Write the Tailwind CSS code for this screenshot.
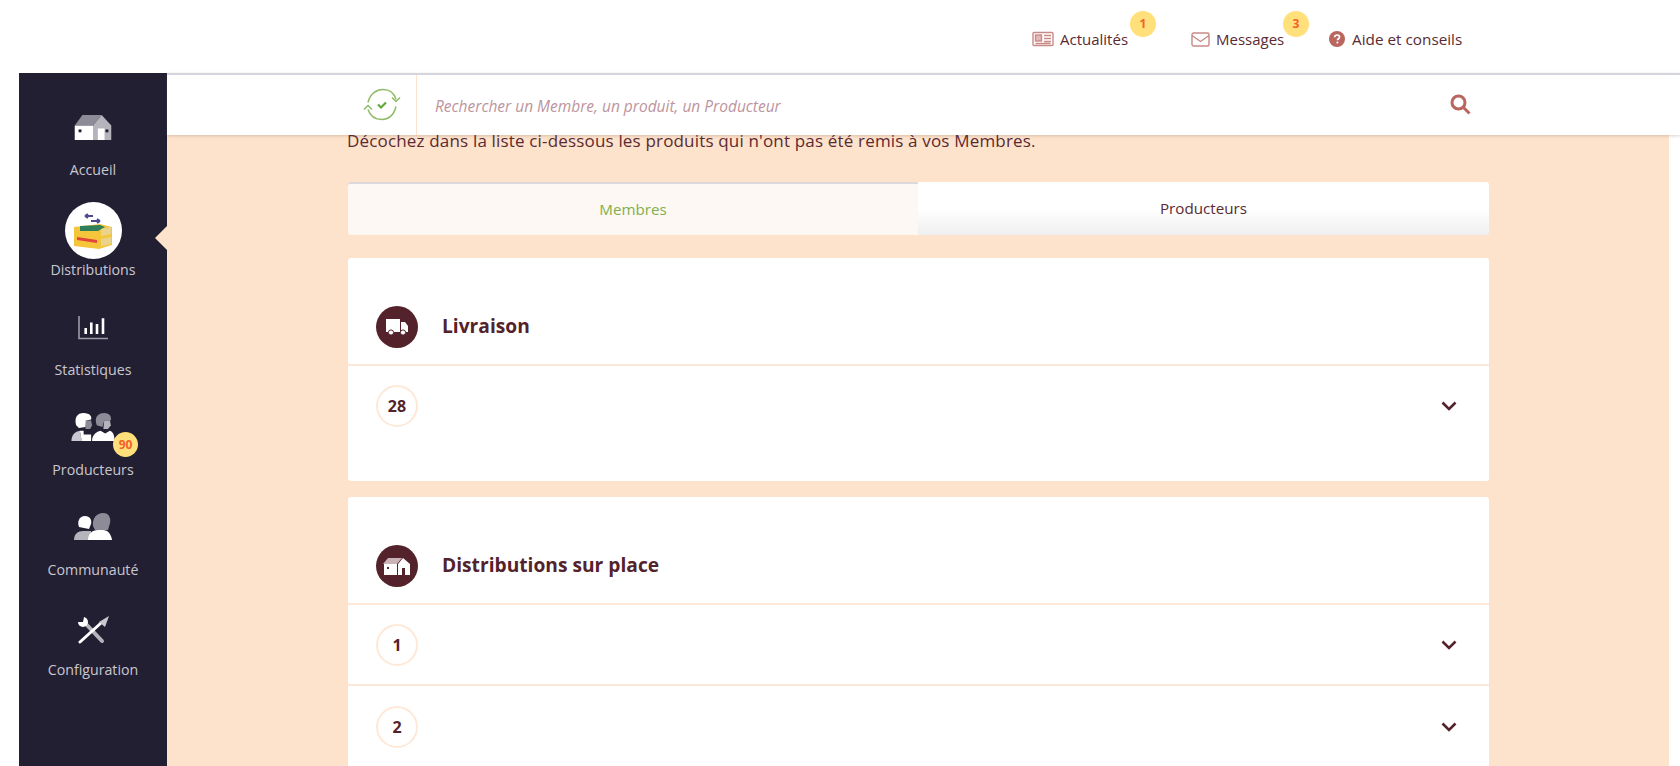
<!DOCTYPE html>
<html lang="fr">
<head>
    <meta charset="UTF-8">
    <title>Distributions</title>
    <script src="https://cdn.jsdelivr.net/npm/@tailwindcss/browser@4"></script>
</head>
<body class="bg-white h-[766px] overflow-hidden font-['Open_Sans',sans-serif] text-[#5a2a33]">
    <!-- top links -->
    <header class="h-[73px] relative text-[15px] leading-[20px]">
        <a class="flex items-center absolute left-[1032px] top-[29px]">
            <svg class="w-[22px] h-[16px] mr-[6px]" viewBox="0 0 22 16" fill="none" stroke="#c98a86" stroke-width="1.4"><rect x="1" y="1.5" width="20" height="13" rx="1"/><rect x="3.5" y="4" width="6" height="6" fill="#e3b9b5"/><path d="M12 4.5h7M12 7.5h7M12 10.5h7M3.5 12.5h15"/></svg>
            <span>Actualités</span>
        </a>
        <span class="absolute left-[1130px] top-[11px] w-[26px] h-[26px] rounded-full bg-[#ffe07a] text-[#f5612c] text-[12px] font-bold flex items-center justify-center">1</span>
        <a class="flex items-center absolute left-[1191px] top-[29px]">
            <svg class="w-[19px] h-[15px] mr-[6px]" viewBox="0 0 19 15" fill="none" stroke="#c98a86" stroke-width="1.4"><rect x="1" y="1" width="17" height="13" rx="1.5"/><path d="M1 3.5l8.5 6 8.5-6"/></svg>
            <span>Messages</span>
        </a>
        <span class="absolute left-[1283px] top-[11px] w-[26px] h-[26px] rounded-full bg-[#ffe07a] text-[#f5612c] text-[12px] font-bold flex items-center justify-center">3</span>
        <a class="flex items-center absolute left-[1329px] top-[29px] text-[15.3px]">
            <svg class="w-[16px] h-[16px] mr-[7px]" viewBox="0 0 16 16"><circle cx="8" cy="8" r="8" fill="#b9665f"/><path d="M5.6 6.2c0-1.4 1.1-2.2 2.5-2.2s2.4.8 2.4 2c0 1.7-2 1.7-2 3.2" fill="none" stroke="#fff" stroke-width="1.7"/><rect x="7.5" y="10.6" width="1.8" height="1.8" fill="#fff"/></svg>
            <span>Aide et conseils</span>
        </a>
    </header>

    <div class="ml-[19px] flex h-[693px]">
        <!-- sidebar -->
        <nav class="w-[148px] bg-[#231f33] text-[#c9c7cf] text-[14.2px] flex flex-col shrink-0 relative">
            <a class="h-[107px] shrink-0 flex flex-col items-center">
                <svg class="mt-[42px] w-[38px] h-[25px] shrink-0" viewBox="0 0 38 26"><path d="M0 11 8 0h20l-9 11z" fill="#8d8b97"/><path d="M0 11h19v15H0z" fill="#fff"/><path d="M19 11 28 0l10 11v15H19z" fill="#b5b3bb"/><rect x="4" y="15" width="3" height="3" fill="#231f33"/><rect x="24" y="14" width="7" height="12" fill="#fff"/><rect x="32" y="15" width="3" height="3" fill="#231f33"/></svg>
                <span class="mt-[20px] leading-[20px]">Accueil</span>
            </a>
            <a class="h-[100px] shrink-0 flex flex-col items-center">
                <span class="mt-[22px] w-[57px] h-[57px] shrink-0 rounded-full bg-white flex items-center justify-center">
                    <svg class="w-[38px] h-[36px]" viewBox="0 0 38 36"><path d="M11 3h8M11 3l3-2M11 3l3 2M17 8h9M26 8l-3-2M26 8l-3 2" fill="none" stroke="#4d4a8f" stroke-width="2"/><path d="M0 14l26-3 12 3v18l-13 4-25-3z" fill="#f5c63c"/><path d="M6 13l20-1 5 2-7 4-18 0z" fill="#2f7f5b"/><path d="M3 24l20 3v3l-20-3z" fill="#e2453c"/><path d="M27 16l10-2v7l-10 2zM27 26l10-2v7l-10 2z" fill="#ead48c"/></svg>
                </span>
                <span class="mt-[1px] leading-[20px]">Distributions</span>
            </a>
            <a class="h-[100px] shrink-0 flex flex-col items-center">
                <svg class="mt-[36px] w-[30px] h-[24px] shrink-0" viewBox="0 0 30 24" fill="none"><path d="M1 0v22.5h29" stroke="#9d9ba6" stroke-width="1.6"/><path d="M7.7 12v6M13.3 6.5V18M19 8v10M25 2.3V18" stroke="#fff" stroke-width="2.6"/></svg>
                <span class="mt-[20px] leading-[20px]">Statistiques</span>
            </a>
            <a class="h-[100px] shrink-0 flex flex-col items-center relative">
                <svg class="mt-[32px] w-[44px] h-[30px] shrink-0" viewBox="0 0 46 32"><path d="M5 14C3 6 6 1 13 1c7 0 9 4 8 7l-5 1-1 7-7 1z" fill="#fff"/><path d="M15 9h6l1 5-2 4h-5z" fill="#8d8b97"/><path d="M0 31c0-7 4-10 9-11l2 11z" fill="#c9c7cf"/><path d="M9 20h4v4h8v7H11z" fill="#fff"/><path d="M27 14c-3-8 1-13 8-13 6 0 8 4 7 8h-7l-2 7z" fill="#8d8b97"/><path d="M35 9h6l1 5-3 4h-5z" fill="#b5b3bb"/><path d="M22 31c0-7 5-10 9-11l5 3 5-3c3 1 5 4 5 11z" fill="#fff"/></svg>
                <span class="mt-[18px] leading-[20px]">Producteurs</span>
                <span class="absolute left-[94px] top-[52px] w-[25px] h-[25px] rounded-full bg-[#ffe07a] text-[#f5612c] text-[12px] font-bold flex items-center justify-center">90</span>
            </a>
            <a class="h-[100px] shrink-0 flex flex-col items-center">
                <svg class="mt-[33px] w-[38px] h-[28px] shrink-0" viewBox="0 0 38 28"><path d="M5 14c-2-5 0-11 6-11 5 0 7 4 6 8l-2 5z" fill="#fff"/><path d="M0 27c0-6 4-9 9-9h8v9z" fill="#b5b3bb"/><path d="M19 13c-1-8 4-13 10-13s8 5 7 10l-2 7H21z" fill="#8d8b97"/><path d="M14 27c0-6 4-10 10-10h5c5 0 8 4 9 10z" fill="#fff"/></svg>
                <span class="mt-[19px] leading-[20px]">Communauté</span>
            </a>
            <a class="h-[100px] shrink-0 flex flex-col items-center">
                <svg class="mt-[36px] w-[32px] h-[28px] shrink-0" viewBox="0 0 32 28" fill="none"><path d="M8 7l17 18" stroke="#b5b3bb" stroke-width="4" stroke-linecap="round"/><circle cx="6" cy="6" r="5" fill="#fff"/><path d="M0 0l7 1-1 5-6 0z" fill="#231f33"/><path d="M3 26 24 7" stroke="#fff" stroke-width="3" stroke-linecap="round"/><path d="M22 6l10-6-4 11z" fill="#c9c7cf"/></svg>
                <span class="mt-[16px] leading-[20px]">Configuration</span>
            </a>
            <span class="absolute left-[136px] top-[153px] w-0 h-0 border-y-[12px] border-y-transparent border-r-[12px] border-r-[#fee3cc]"></span>
        </nav>

        <main class="flex-1 min-w-0 flex flex-col">
            <!-- search bar -->
            <div class="h-[62px] bg-white border-t-2 border-[#d5d5e0] shadow-[0_1px_3px_rgba(120,80,60,0.25)] relative z-10 flex items-center shrink-0">
                <div class="w-[250px] h-full border-r border-[#fee3cc] flex items-center justify-end pr-[14px] shrink-0">
                    <svg class="w-[40px] h-[35px] -mt-[2px]" viewBox="0 0 40 34" fill="none" stroke="#8fbb68" stroke-width="1.5"><path d="M6 15C8 6 15 2 21 2c6 0 11 3 13 10"/><path d="M34 19c-2 9-8 13-14 13-7 0-12-4-14-10"/><path d="M30 10l4 4 4-4M2 22l4-4 4 4"/><path d="M16 17l3 3 5-5" stroke="#5fa83e" stroke-width="2.2"/></svg>
                </div>
                <span class="ml-[18px] mt-[4px] italic text-[15.5px] text-[#bd949d]">Rechercher un Membre, un produit, un Producteur</span>
                <svg class="absolute left-[1283px] top-[19px] w-[21px] h-[21px]" viewBox="0 0 21 21" fill="none" stroke="#b9665f" stroke-width="3"><circle cx="8.5" cy="8.5" r="6.5"/><path d="M13.5 13.5l6 6"/></svg>
            </div>

            <div class="bg-[#fee3cc] flex-1 mr-[11px] pl-[181px] pr-[180px] -mt-[5px] overflow-hidden">
                <p class="text-[17px] tracking-[0.17px] leading-[22px] -ml-[1px] text-[#5a2a33]">Décochez dans la liste ci-dessous les produits qui n'ont pas été remis à vos Membres.</p>

                <!-- tabs -->
                <div class="mt-[30px] h-[53px] flex text-[15.2px]">
                    <div class="w-[570px] rounded-l-[3px] bg-[#fdf8f4] border-t-2 border-[#dcd8dc] text-[#7fb04f] flex items-center justify-center">Membres</div>
                    <div class="flex-1 rounded-r-[3px] bg-gradient-to-b from-white from-50% to-[#efefef] flex items-center justify-center">Producteurs</div>
                </div>

                <!-- livraison -->
                <section class="mt-[23px] bg-white rounded-[3px] h-[223px]">
                    <div class="h-[108px] pt-[48px] pl-[28px] flex items-start border-b-2 border-[#fee9d8]">
                        <span class="w-[42px] h-[42px] rounded-full bg-[#54222b] flex items-center justify-center">
                            <svg class="w-[24px] h-[18px]" viewBox="0 0 24 18" fill="#fff"><path d="M1 1h14v13H1zM16 4h4l3 4v6h-7z"/><circle cx="6" cy="14.5" r="2.6" stroke="#54222b"/><circle cx="18" cy="14.5" r="2.6" stroke="#54222b"/></svg>
                        </span>
                        <h2 class="ml-[24px] text-[19.2px] font-bold leading-[40px] text-[#54222b]">Livraison</h2>
                    </div>
                    <div class="pt-[19px] pl-[28px] pr-[32px] flex items-center justify-between">
                        <span class="w-[42px] h-[42px] rounded-full border-2 border-[#fee9d8] flex items-center justify-center text-[16px] font-bold text-[#54222b]">28</span>
                        <svg class="w-[16px] h-[10px]" viewBox="0 0 16 10" fill="none" stroke="#54222b" stroke-width="2.6"><path d="M1.5 1.5 8 8l6.5-6.5"/></svg>
                    </div>
                </section>

                <!-- sur place -->
                <section class="mt-[16px] bg-white rounded-t-[3px]">
                    <div class="h-[108px] pt-[48px] pl-[28px] flex items-start border-b-2 border-[#fee9d8]">
                        <span class="w-[42px] h-[42px] rounded-full bg-[#54222b] flex items-center justify-center">
                            <svg class="w-[28px] h-[18px]" viewBox="0 0 28 18"><path d="M0 7 5 1h14l-5 6z" fill="#c9b3b6"/><path d="M1 7h13v11H1z" fill="#fff"/><path d="M15 18V7l5-6 7 6v11z" fill="#fff"/><rect x="19" y="11" width="3" height="7" fill="#54222b"/><rect x="4" y="10" width="2" height="2" fill="#54222b"/></svg>
                        </span>
                        <h2 class="ml-[24px] text-[19.2px] font-bold leading-[40px] text-[#54222b]">Distributions sur place</h2>
                    </div>
                    <div class="h-[81px] pl-[28px] pr-[32px] flex items-center justify-between border-b-2 border-[#fee9d8]">
                        <span class="w-[42px] h-[42px] rounded-full border-2 border-[#fee9d8] flex items-center justify-center text-[16px] font-bold text-[#54222b]">1</span>
                        <svg class="w-[16px] h-[10px]" viewBox="0 0 16 10" fill="none" stroke="#54222b" stroke-width="2.6"><path d="M1.5 1.5 8 8l6.5-6.5"/></svg>
                    </div>
                    <div class="h-[81px] pl-[28px] pr-[32px] flex items-center justify-between">
                        <span class="w-[42px] h-[42px] rounded-full border-2 border-[#fee9d8] flex items-center justify-center text-[16px] font-bold text-[#54222b]">2</span>
                        <svg class="w-[16px] h-[10px]" viewBox="0 0 16 10" fill="none" stroke="#54222b" stroke-width="2.6"><path d="M1.5 1.5 8 8l6.5-6.5"/></svg>
                    </div>
                </section>
            </div>
        </main>
    </div>
</body>
</html>
